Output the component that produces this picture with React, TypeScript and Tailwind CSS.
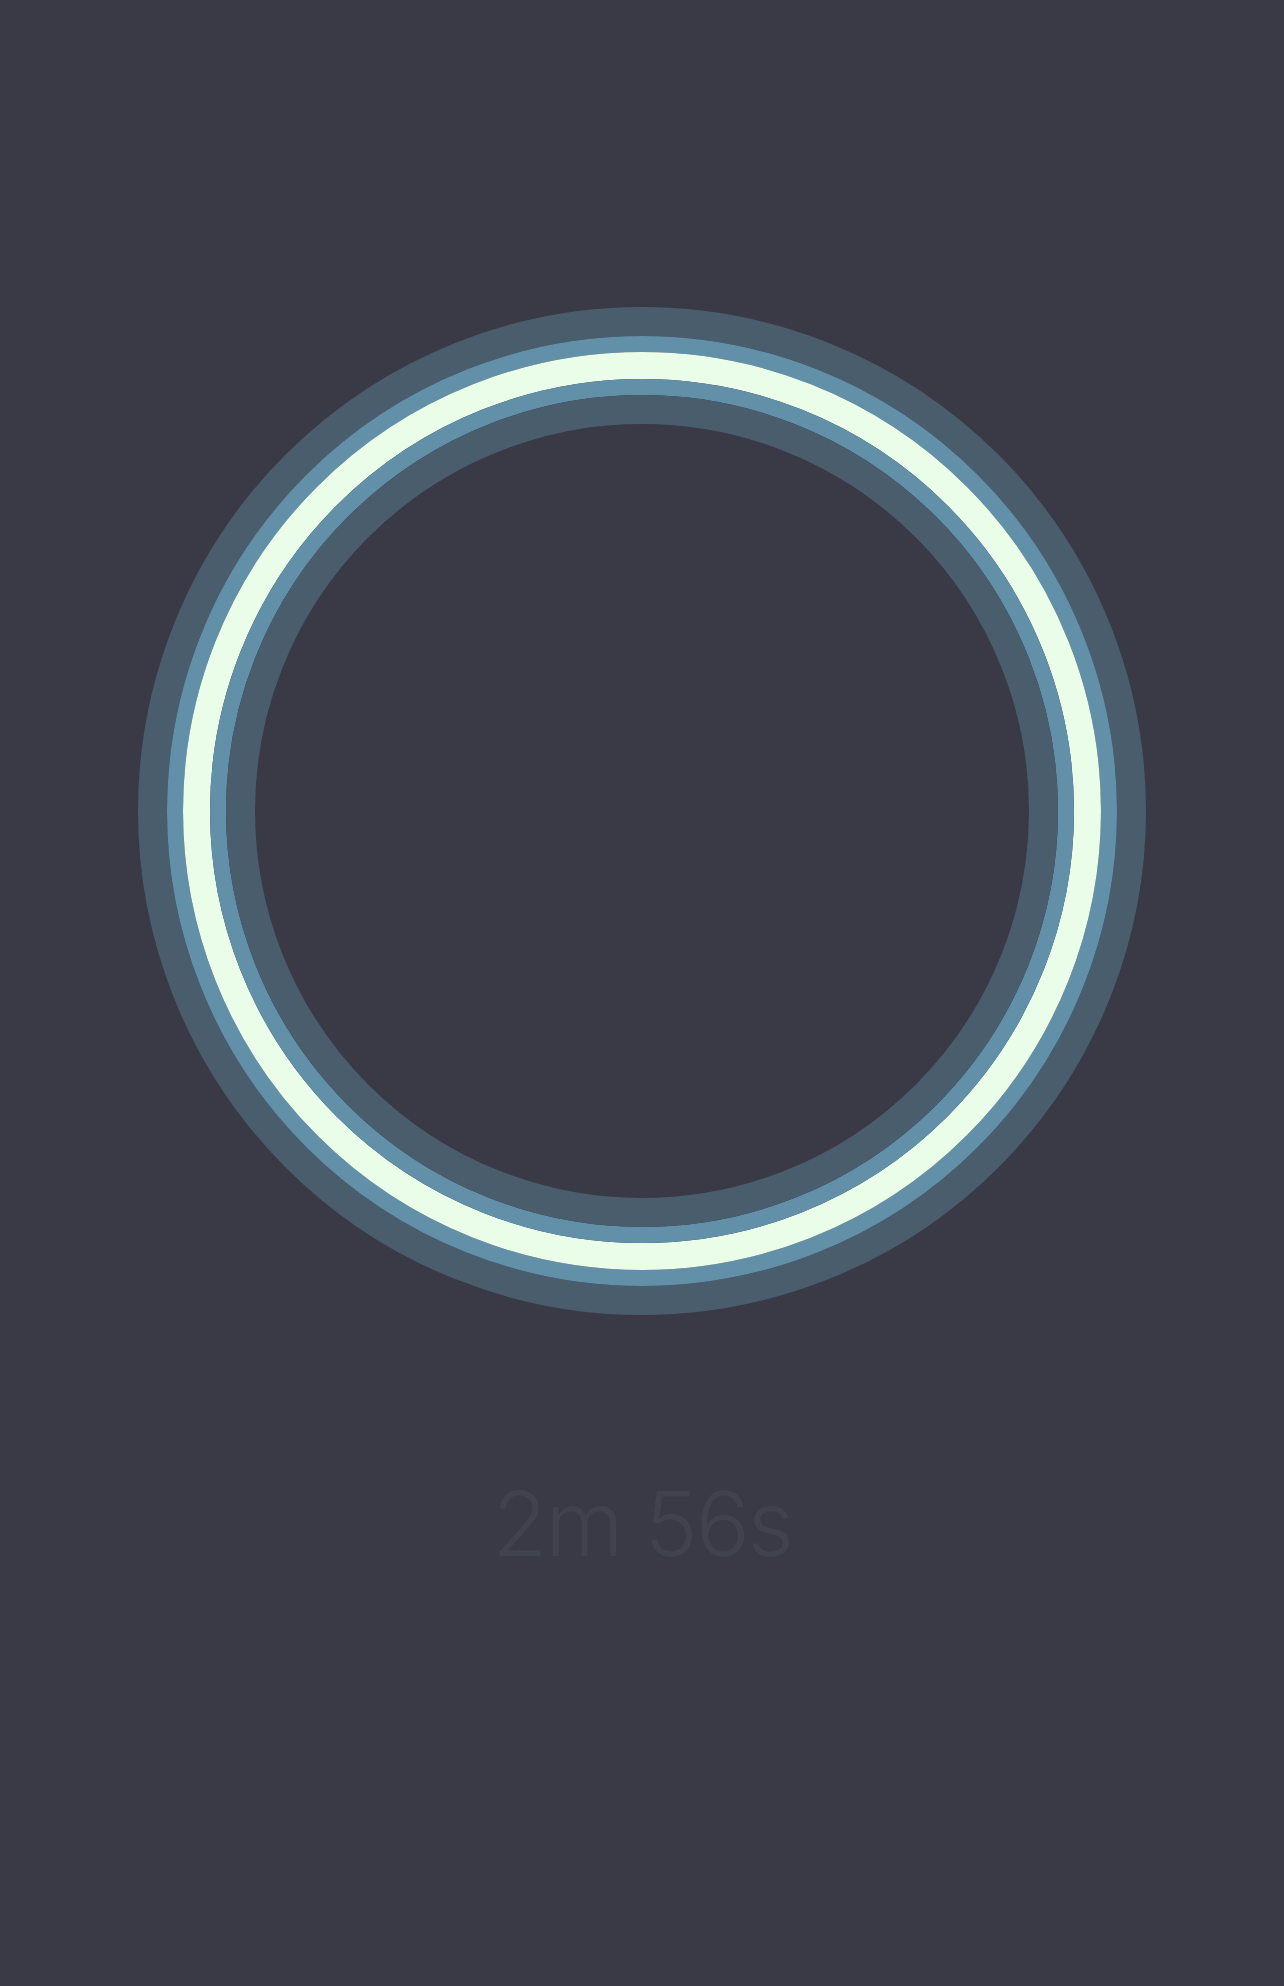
export default function App() {
  return (
    <main className="min-h-[1986px] w-full bg-[#393a46] flex flex-col items-center pt-[307px]">
      <div className="w-[1008px] h-[1008px] rounded-full border-[29px] border-[#4a5d6c] flex">
        <div className="flex-1 rounded-full border-[16px] border-[#6290a9] flex">
          <div className="flex-1 rounded-full border-[27px] border-[#eafde9] flex">
            <div className="flex-1 rounded-full border-[16px] border-[#6290a9] flex">
              <div className="flex-1 rounded-full border-[29px] border-[#4a5d6c] bg-[#393a46]" />
            </div>
          </div>
        </div>
      </div>

      <p className="mt-[164px] text-[90px] leading-none font-light tracking-[-0.025em] text-[#40424e] font-['Inter','Liberation_Sans',sans-serif]">
        2m 56s
      </p>
    </main>
  );
}
